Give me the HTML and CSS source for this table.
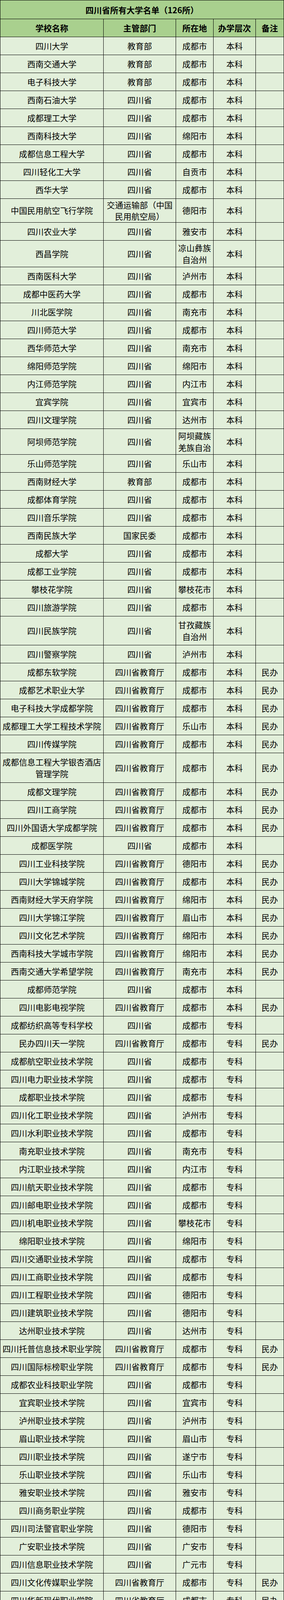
FILE: index.html
```html
<!DOCTYPE html>
<html lang="zh-CN">
<head>
<meta charset="utf-8">
<title>四川省所有大学名单</title>
<link rel="stylesheet" href="styles.css">
</head>
<body>
<div class="sheet">
<div class="title">四川省所有大学名单（126所）</div>
<div class="row head"><div class="c">学校名称</div><div class="c">主管部门</div><div class="c">所在地</div><div class="c">办学层次</div><div class="c">备注</div></div>
<div class="row"><div class="c">四川大学</div><div class="c">教育部</div><div class="c">成都市</div><div class="c">本科</div><div class="c"></div></div>
<div class="row"><div class="c">西南交通大学</div><div class="c">教育部</div><div class="c">成都市</div><div class="c">本科</div><div class="c"></div></div>
<div class="row"><div class="c">电子科技大学</div><div class="c">教育部</div><div class="c">成都市</div><div class="c">本科</div><div class="c"></div></div>
<div class="row"><div class="c">西南石油大学</div><div class="c">四川省</div><div class="c">成都市</div><div class="c">本科</div><div class="c"></div></div>
<div class="row"><div class="c">成都理工大学</div><div class="c">四川省</div><div class="c">成都市</div><div class="c">本科</div><div class="c"></div></div>
<div class="row"><div class="c">西南科技大学</div><div class="c">四川省</div><div class="c">绵阳市</div><div class="c">本科</div><div class="c"></div></div>
<div class="row"><div class="c">成都信息工程大学</div><div class="c">四川省</div><div class="c">成都市</div><div class="c">本科</div><div class="c"></div></div>
<div class="row"><div class="c">四川轻化工大学</div><div class="c">四川省</div><div class="c">自贡市</div><div class="c">本科</div><div class="c"></div></div>
<div class="row"><div class="c">西华大学</div><div class="c">四川省</div><div class="c">成都市</div><div class="c">本科</div><div class="c"></div></div>
<div class="row h60"><div class="c">中国民用航空飞行学院</div><div class="c">交通运输部（中国民用航空局）</div><div class="c">德阳市</div><div class="c">本科</div><div class="c"></div></div>
<div class="row"><div class="c">四川农业大学</div><div class="c">四川省</div><div class="c">雅安市</div><div class="c">本科</div><div class="c"></div></div>
<div class="row h67"><div class="c">西昌学院</div><div class="c">四川省</div><div class="c">凉山彝族自治州</div><div class="c">本科</div><div class="c"></div></div>
<div class="row"><div class="c">西南医科大学</div><div class="c">四川省</div><div class="c">泸州市</div><div class="c">本科</div><div class="c"></div></div>
<div class="row"><div class="c">成都中医药大学</div><div class="c">四川省</div><div class="c">成都市</div><div class="c">本科</div><div class="c"></div></div>
<div class="row"><div class="c">川北医学院</div><div class="c">四川省</div><div class="c">南充市</div><div class="c">本科</div><div class="c"></div></div>
<div class="row"><div class="c">四川师范大学</div><div class="c">四川省</div><div class="c">成都市</div><div class="c">本科</div><div class="c"></div></div>
<div class="row"><div class="c">西华师范大学</div><div class="c">四川省</div><div class="c">南充市</div><div class="c">本科</div><div class="c"></div></div>
<div class="row"><div class="c">绵阳师范学院</div><div class="c">四川省</div><div class="c">绵阳市</div><div class="c">本科</div><div class="c"></div></div>
<div class="row"><div class="c">内江师范学院</div><div class="c">四川省</div><div class="c">内江市</div><div class="c">本科</div><div class="c"></div></div>
<div class="row"><div class="c">宜宾学院</div><div class="c">四川省</div><div class="c">宜宾市</div><div class="c">本科</div><div class="c"></div></div>
<div class="row"><div class="c">四川文理学院</div><div class="c">四川省</div><div class="c">达州市</div><div class="c">本科</div><div class="c"></div></div>
<div class="row h65"><div class="c">阿坝师范学院</div><div class="c">四川省</div><div class="c">阿坝藏族羌族自治</div><div class="c">本科</div><div class="c"></div></div>
<div class="row"><div class="c">乐山师范学院</div><div class="c">四川省</div><div class="c">乐山市</div><div class="c">本科</div><div class="c"></div></div>
<div class="row"><div class="c">西南财经大学</div><div class="c">教育部</div><div class="c">成都市</div><div class="c">本科</div><div class="c"></div></div>
<div class="row"><div class="c">成都体育学院</div><div class="c">四川省</div><div class="c">成都市</div><div class="c">本科</div><div class="c"></div></div>
<div class="row"><div class="c">四川音乐学院</div><div class="c">四川省</div><div class="c">成都市</div><div class="c">本科</div><div class="c"></div></div>
<div class="row"><div class="c">西南民族大学</div><div class="c">国家民委</div><div class="c">成都市</div><div class="c">本科</div><div class="c"></div></div>
<div class="row"><div class="c">成都大学</div><div class="c">四川省</div><div class="c">成都市</div><div class="c">本科</div><div class="c"></div></div>
<div class="row"><div class="c">成都工业学院</div><div class="c">四川省</div><div class="c">成都市</div><div class="c">本科</div><div class="c"></div></div>
<div class="row"><div class="c">攀枝花学院</div><div class="c">四川省</div><div class="c">攀枝花市</div><div class="c">本科</div><div class="c"></div></div>
<div class="row"><div class="c">四川旅游学院</div><div class="c">四川省</div><div class="c">成都市</div><div class="c">本科</div><div class="c"></div></div>
<div class="row h73"><div class="c">四川民族学院</div><div class="c">四川省</div><div class="c">甘孜藏族自治州</div><div class="c">本科</div><div class="c"></div></div>
<div class="row"><div class="c">四川警察学院</div><div class="c">四川省</div><div class="c">泸州市</div><div class="c">本科</div><div class="c"></div></div>
<div class="row"><div class="c">成都东软学院</div><div class="c">四川省教育厅</div><div class="c">成都市</div><div class="c">本科</div><div class="c">民办</div></div>
<div class="row"><div class="c">成都艺术职业大学</div><div class="c">四川省教育厅</div><div class="c">成都市</div><div class="c">本科</div><div class="c">民办</div></div>
<div class="row"><div class="c">电子科技大学成都学院</div><div class="c">四川省教育厅</div><div class="c">成都市</div><div class="c">本科</div><div class="c">民办</div></div>
<div class="row"><div class="c">成都理工大学工程技术学院</div><div class="c">四川省教育厅</div><div class="c">乐山市</div><div class="c">本科</div><div class="c">民办</div></div>
<div class="row"><div class="c">四川传媒学院</div><div class="c">四川省教育厅</div><div class="c">成都市</div><div class="c">本科</div><div class="c">民办</div></div>
<div class="row h75"><div class="c">成都信息工程大学银杏酒店管理学院</div><div class="c">四川省教育厅</div><div class="c">成都市</div><div class="c">本科</div><div class="c">民办</div></div>
<div class="row"><div class="c">成都文理学院</div><div class="c">四川省教育厅</div><div class="c">成都市</div><div class="c">本科</div><div class="c">民办</div></div>
<div class="row"><div class="c">四川工商学院</div><div class="c">四川省教育厅</div><div class="c">成都市</div><div class="c">本科</div><div class="c">民办</div></div>
<div class="row"><div class="c">四川外国语大学成都学院</div><div class="c">四川省教育厅</div><div class="c">成都市</div><div class="c">本科</div><div class="c">民办</div></div>
<div class="row"><div class="c">成都医学院</div><div class="c">四川省</div><div class="c">成都市</div><div class="c">本科</div><div class="c"></div></div>
<div class="row"><div class="c">四川工业科技学院</div><div class="c">四川省教育厅</div><div class="c">德阳市</div><div class="c">本科</div><div class="c">民办</div></div>
<div class="row"><div class="c">四川大学锦城学院</div><div class="c">四川省教育厅</div><div class="c">成都市</div><div class="c">本科</div><div class="c">民办</div></div>
<div class="row"><div class="c">西南财经大学天府学院</div><div class="c">四川省教育厅</div><div class="c">绵阳市</div><div class="c">本科</div><div class="c">民办</div></div>
<div class="row"><div class="c">四川大学锦江学院</div><div class="c">四川省教育厅</div><div class="c">眉山市</div><div class="c">本科</div><div class="c">民办</div></div>
<div class="row"><div class="c">四川文化艺术学院</div><div class="c">四川省教育厅</div><div class="c">绵阳市</div><div class="c">本科</div><div class="c">民办</div></div>
<div class="row"><div class="c">西南科技大学城市学院</div><div class="c">四川省教育厅</div><div class="c">绵阳市</div><div class="c">本科</div><div class="c">民办</div></div>
<div class="row"><div class="c">西南交通大学希望学院</div><div class="c">四川省教育厅</div><div class="c">南充市</div><div class="c">本科</div><div class="c">民办</div></div>
<div class="row"><div class="c">成都师范学院</div><div class="c">四川省</div><div class="c">成都市</div><div class="c">本科</div><div class="c"></div></div>
<div class="row"><div class="c">四川电影电视学院</div><div class="c">四川省教育厅</div><div class="c">成都市</div><div class="c">本科</div><div class="c">民办</div></div>
<div class="row"><div class="c">成都纺织高等专科学校</div><div class="c">四川省</div><div class="c">成都市</div><div class="c">专科</div><div class="c"></div></div>
<div class="row"><div class="c">民办四川天一学院</div><div class="c">四川省教育厅</div><div class="c">成都市</div><div class="c">专科</div><div class="c">民办</div></div>
<div class="row"><div class="c">成都航空职业技术学院</div><div class="c">四川省</div><div class="c">成都市</div><div class="c">专科</div><div class="c"></div></div>
<div class="row"><div class="c">四川电力职业技术学院</div><div class="c">四川省</div><div class="c">成都市</div><div class="c">专科</div><div class="c"></div></div>
<div class="row"><div class="c">成都职业技术学院</div><div class="c">四川省</div><div class="c">成都市</div><div class="c">专科</div><div class="c"></div></div>
<div class="row"><div class="c">四川化工职业技术学院</div><div class="c">四川省</div><div class="c">泸州市</div><div class="c">专科</div><div class="c"></div></div>
<div class="row"><div class="c">四川水利职业技术学院</div><div class="c">四川省</div><div class="c">成都市</div><div class="c">专科</div><div class="c"></div></div>
<div class="row"><div class="c">南充职业技术学院</div><div class="c">四川省</div><div class="c">南充市</div><div class="c">专科</div><div class="c"></div></div>
<div class="row"><div class="c">内江职业技术学院</div><div class="c">四川省</div><div class="c">内江市</div><div class="c">专科</div><div class="c"></div></div>
<div class="row"><div class="c">四川航天职业技术学院</div><div class="c">四川省</div><div class="c">成都市</div><div class="c">专科</div><div class="c"></div></div>
<div class="row"><div class="c">四川邮电职业技术学院</div><div class="c">四川省</div><div class="c">成都市</div><div class="c">专科</div><div class="c"></div></div>
<div class="row"><div class="c">四川机电职业技术学院</div><div class="c">四川省</div><div class="c">攀枝花市</div><div class="c">专科</div><div class="c"></div></div>
<div class="row"><div class="c">绵阳职业技术学院</div><div class="c">四川省</div><div class="c">绵阳市</div><div class="c">专科</div><div class="c"></div></div>
<div class="row"><div class="c">四川交通职业技术学院</div><div class="c">四川省</div><div class="c">成都市</div><div class="c">专科</div><div class="c"></div></div>
<div class="row"><div class="c">四川工商职业技术学院</div><div class="c">四川省</div><div class="c">成都市</div><div class="c">专科</div><div class="c"></div></div>
<div class="row"><div class="c">四川工程职业技术学院</div><div class="c">四川省</div><div class="c">德阳市</div><div class="c">专科</div><div class="c"></div></div>
<div class="row"><div class="c">四川建筑职业技术学院</div><div class="c">四川省</div><div class="c">德阳市</div><div class="c">专科</div><div class="c"></div></div>
<div class="row"><div class="c">达州职业技术学院</div><div class="c">四川省</div><div class="c">达州市</div><div class="c">专科</div><div class="c"></div></div>
<div class="row"><div class="c">四川托普信息技术职业学院</div><div class="c">四川省教育厅</div><div class="c">成都市</div><div class="c">专科</div><div class="c">民办</div></div>
<div class="row"><div class="c">四川国际标榜职业学院</div><div class="c">四川省教育厅</div><div class="c">成都市</div><div class="c">专科</div><div class="c">民办</div></div>
<div class="row"><div class="c">成都农业科技职业学院</div><div class="c">四川省</div><div class="c">成都市</div><div class="c">专科</div><div class="c"></div></div>
<div class="row"><div class="c">宜宾职业技术学院</div><div class="c">四川省</div><div class="c">宜宾市</div><div class="c">专科</div><div class="c"></div></div>
<div class="row"><div class="c">泸州职业技术学院</div><div class="c">四川省</div><div class="c">泸州市</div><div class="c">专科</div><div class="c"></div></div>
<div class="row"><div class="c">眉山职业技术学院</div><div class="c">四川省</div><div class="c">眉山市</div><div class="c">专科</div><div class="c"></div></div>
<div class="row"><div class="c">四川职业技术学院</div><div class="c">四川省</div><div class="c">遂宁市</div><div class="c">专科</div><div class="c"></div></div>
<div class="row"><div class="c">乐山职业技术学院</div><div class="c">四川省</div><div class="c">乐山市</div><div class="c">专科</div><div class="c"></div></div>
<div class="row"><div class="c">雅安职业技术学院</div><div class="c">四川省</div><div class="c">雅安市</div><div class="c">专科</div><div class="c"></div></div>
<div class="row"><div class="c">四川商务职业学院</div><div class="c">四川省</div><div class="c">成都市</div><div class="c">专科</div><div class="c"></div></div>
<div class="row"><div class="c">四川司法警官职业学院</div><div class="c">四川省</div><div class="c">德阳市</div><div class="c">专科</div><div class="c"></div></div>
<div class="row"><div class="c">广安职业技术学院</div><div class="c">四川省</div><div class="c">广安市</div><div class="c">专科</div><div class="c"></div></div>
<div class="row"><div class="c">四川信息职业技术学院</div><div class="c">四川省</div><div class="c">广元市</div><div class="c">专科</div><div class="c"></div></div>
<div class="row"><div class="c">四川文化传媒职业学院</div><div class="c">四川省教育厅</div><div class="c">成都市</div><div class="c">专科</div><div class="c">民办</div></div>
<div class="row"><div class="c">四川华新现代职业学院</div><div class="c">四川省教育厅</div><div class="c">成都市</div><div class="c">专科</div><div class="c">民办</div></div>
<div class="row"><div class="c">四川铁道职业学院</div><div class="c">四川省</div><div class="c">成都市</div><div class="c">专科</div><div class="c"></div></div>
<div class="row"><div class="c">四川艺术职业学院</div><div class="c">四川省</div><div class="c">成都市</div><div class="c">专科</div><div class="c"></div></div>
<div class="row"><div class="c">四川中医药高等专科学校</div><div class="c">四川省</div><div class="c">绵阳市</div><div class="c">专科</div><div class="c"></div></div>
<div class="row"><div class="c">四川科技职业学院</div><div class="c">四川省教育厅</div><div class="c">成都市</div><div class="c">专科</div><div class="c">民办</div></div>
<div class="row"><div class="c">四川文化产业职业学院</div><div class="c">四川省</div><div class="c">成都市</div><div class="c">专科</div><div class="c"></div></div>
<div class="row"><div class="c">四川财经职业学院</div><div class="c">四川省</div><div class="c">成都市</div><div class="c">专科</div><div class="c"></div></div>
<div class="row"><div class="c">四川城市职业学院</div><div class="c">四川省教育厅</div><div class="c">成都市</div><div class="c">专科</div><div class="c">民办</div></div>
<div class="row"><div class="c">四川现代职业学院</div><div class="c">四川省教育厅</div><div class="c">成都市</div><div class="c">专科</div><div class="c">民办</div></div>
<div class="row"><div class="c">四川幼儿师范高等专科学校</div><div class="c">四川省</div><div class="c">绵阳市</div><div class="c">专科</div><div class="c"></div></div>
<div class="row"><div class="c">四川长江职业学院</div><div class="c">四川省教育厅</div><div class="c">成都市</div><div class="c">专科</div><div class="c">民办</div></div>
<div class="row"><div class="c">四川三河职业学院</div><div class="c">四川省教育厅</div><div class="c">泸州市</div><div class="c">专科</div><div class="c">民办</div></div>
<div class="row"><div class="c">川北幼儿师范高等专科学校</div><div class="c">四川省</div><div class="c">广元市</div><div class="c">专科</div><div class="c"></div></div>
<div class="row"><div class="c">四川卫生康复职业学院</div><div class="c">四川省</div><div class="c">自贡市</div><div class="c">专科</div><div class="c"></div></div>
<div class="row"><div class="c">四川汽车职业技术学院</div><div class="c">四川省教育厅</div><div class="c">绵阳市</div><div class="c">专科</div><div class="c">民办</div></div>
<div class="row"><div class="c">巴中职业技术学院</div><div class="c">四川省教育厅</div><div class="c">巴中市</div><div class="c">专科</div><div class="c">民办</div></div>
<div class="row"><div class="c">四川希望汽车职业学院</div><div class="c">四川省教育厅</div><div class="c">资阳市</div><div class="c">专科</div><div class="c">民办</div></div>
<div class="row"><div class="c">四川电子机械职业技术学院</div><div class="c">四川省教育厅</div><div class="c">绵阳市</div><div class="c">专科</div><div class="c">民办</div></div>
<div class="row"><div class="c">四川文轩职业学院</div><div class="c">四川省教育厅</div><div class="c">成都市</div><div class="c">专科</div><div class="c">民办</div></div>
<div class="row"><div class="c">川南幼儿师范高等专科学校</div><div class="c">四川省</div><div class="c">内江市</div><div class="c">专科</div><div class="c"></div></div>
<div class="row"><div class="c">四川护理职业学院</div><div class="c">四川省</div><div class="c">德阳市</div><div class="c">专科</div><div class="c"></div></div>
<div class="row"><div class="c">成都工业职业技术学院</div><div class="c">四川省</div><div class="c">成都市</div><div class="c">专科</div><div class="c"></div></div>
<div class="row"><div class="c">四川西南航空职业学院</div><div class="c">四川省教育厅</div><div class="c">成都市</div><div class="c">专科</div><div class="c">民办</div></div>
<div class="row"><div class="c">成都工贸职业技术学院</div><div class="c">四川省</div><div class="c">成都市</div><div class="c">专科</div><div class="c"></div></div>
<div class="row"><div class="c">四川应用技术职业学院</div><div class="c">四川省教育厅</div><div class="c">凉山州</div><div class="c">专科</div><div class="c">民办</div></div>
<div class="row h63"><div class="c">西昌民族幼儿师范高等专科学校</div><div class="c">四川省</div><div class="c">凉山彝族自治州</div><div class="c">专科</div><div class="c"></div></div>
<div class="row"><div class="c">眉山药科职业学院</div><div class="c">四川省教育厅</div><div class="c">眉山市</div><div class="c">专科</div><div class="c">民办</div></div>
<div class="row"><div class="c">天府新区信息职业学院</div><div class="c">四川省教育厅</div><div class="c">眉山市</div><div class="c">专科</div><div class="c">民办</div></div>
<div class="row"><div class="c">德阳城市轨道交通职业学院</div><div class="c">四川省教育厅</div><div class="c">德阳市</div><div class="c">专科</div><div class="c">民办</div></div>
<div class="row"><div class="c">德阳科贸职业学院</div><div class="c">四川省教育厅</div><div class="c">德阳市</div><div class="c">专科</div><div class="c">民办</div></div>
<div class="row"><div class="c">江阳城建职业学院</div><div class="c">四川省教育厅</div><div class="c">泸州市</div><div class="c">专科</div><div class="c">民办</div></div>
<div class="row"><div class="c">天府新区航空旅游职业学院</div><div class="c">四川省教育厅</div><div class="c">眉山市</div><div class="c">专科</div><div class="c">民办</div></div>
<div class="row"><div class="c">天府新区通用航空职业学院</div><div class="c">四川省教育厅</div><div class="c">眉山市</div><div class="c">专科</div><div class="c">民办</div></div>
<div class="row h105"><div class="c">阿坝职业学院</div><div class="c">四川省</div><div class="c">阿坝藏族羌族自治州</div><div class="c">专科</div><div class="c"></div></div>
<div class="row"><div class="c">达州中医药职业学院</div><div class="c">四川省</div><div class="c">达州市</div><div class="c">专科</div><div class="c"></div></div>
<div class="row"><div class="c">内江卫生与健康职业学院</div><div class="c">四川省</div><div class="c">内江市</div><div class="c">专科</div><div class="c"></div></div>
<div class="row"><div class="c">南充科技职业学院</div><div class="c">四川省教育厅</div><div class="c">南充市</div><div class="c">专科</div><div class="c">民办</div></div>
<div class="row"><div class="c">攀枝花攀西职业学院</div><div class="c">四川省教育厅</div><div class="c">攀枝花市</div><div class="c">专科</div><div class="c">民办</div></div>
<div class="row"><div class="c">资阳口腔职业学院</div><div class="c">四川省教育厅</div><div class="c">资阳市</div><div class="c">专科</div><div class="c">民办</div></div>
<div class="row"><div class="c">资阳环境科技职业学院</div><div class="c">四川省教育厅</div><div class="c">资阳市</div><div class="c">专科</div><div class="c">民办</div></div>
<div class="row"><div class="c">广元中核职业技术学院</div><div class="c">四川省教育厅</div><div class="c">广元市</div><div class="c">专科</div><div class="c">民办</div></div>
<div class="row"><div class="c">四川体育职业学院</div><div class="c">四川省</div><div class="c">成都市</div><div class="c">专科</div><div class="c"></div></div>
</div>
</body>
</html>
```

FILE: styles.css
```css
* {
  box-sizing: border-box;
}

html,
body {
  margin: 0;
  padding: 0;
  background: #ffffff;
}

body {
  font-family: "Noto Sans CJK SC", "Noto Sans", sans-serif;
  color: #000000;
}

.sheet {
  width: 726px;
  padding: 1px;
  background: #000000;
  display: flex;
  flex-direction: column;
  gap: 1px;
}

.title {
  height: 47px;
  background: #a9d08e;
  display: flex;
  align-items: center;
  justify-content: center;
  font-size: 21px;
  font-weight: 700;
}

.row {
  display: grid;
  grid-template-columns: 263px 184px 95px 107px 71px;
  gap: 1px;
  height: 45px;
}

.c {
  background: #e2efda;
  display: flex;
  align-items: center;
  justify-content: center;
  text-align: center;
  font-size: 21px;
  line-height: 29.5px;
  padding: 0 4px;
}

.head .c {
  background: #a9d08e;
  font-weight: 700;
}

.h60 { height: 60px; }
.h63 { height: 63px; }
.h65 { height: 65px; }
.h67 { height: 67px; }
.h73 { height: 73px; }
.h75 { height: 75px; }
.h105 { height: 105px; }
```
